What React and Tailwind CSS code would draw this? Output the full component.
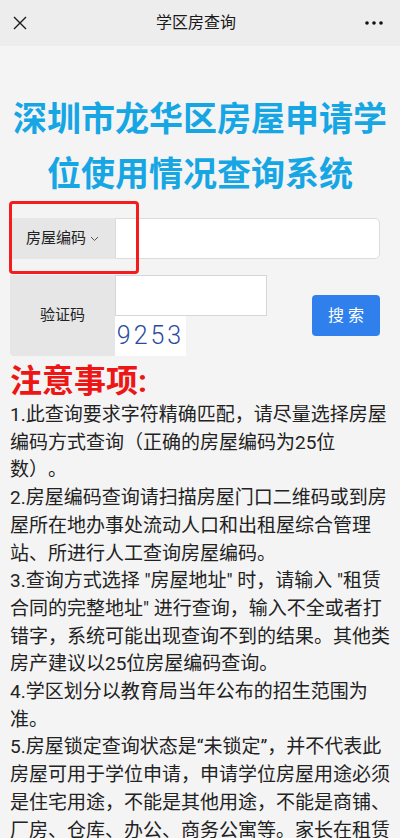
export default function App() {
  const font = { fontFamily: 'Roboto, "Noto Sans CJK SC", sans-serif' };

  return (
    <div className="min-h-screen bg-[#f4f4f4] text-[#222] [text-spacing-trim:space-all]" style={font}>
      {/* 顶部导航 */}
      <div className="h-[46px] bg-[#ededed] flex items-center justify-between px-[13px]">
        <svg width="14" height="14" viewBox="0 0 14 14" className="shrink-0">
          <path d="M1 1 L13 13 M13 1 L1 13" stroke="#1a1a1a" strokeWidth="1.4" />
        </svg>
        <span className="text-[16px] text-[#1a1a1a]">学区房查询</span>
        <svg width="18" height="6" viewBox="0 0 18 6" className="shrink-0 mr-[4px]">
          <circle cx="2" cy="3" r="1.8" fill="#111" />
          <circle cx="9" cy="3" r="1.8" fill="#111" />
          <circle cx="16" cy="3" r="1.8" fill="#111" />
        </svg>
      </div>

      <div className="px-[10px]">
        {/* 标题 */}
        <h1 className="pt-[46px] text-center text-[34px] leading-[55px] font-bold text-[#17a6e4]">
          深圳市龙华区房屋申请学
          <br />
          位使用情况查询系统
        </h1>

        {/* 查询表单 */}
        <div className="relative mt-[16px] mr-[10px]">
          <div className="flex h-[41px]">
            <div className="w-[105px] bg-[#e6e6e6] flex items-center justify-center gap-[4px] text-[15px] text-[#222]">
              房屋编码
              <svg width="9" height="6" viewBox="0 0 9 6">
                <path d="M1 1 L4.5 4.5 L8 1" fill="none" stroke="#555" strokeWidth="1" />
              </svg>
            </div>
            <div className="flex-1 bg-white border border-[#dcdcdc] rounded-r-[5px]" />
          </div>
          <div className="absolute left-[-1px] top-[-17px] w-[130px] h-[73px] border-[3.5px] border-[#f41c1c] rounded-[4px]" />

          <div className="flex items-center mt-[16px]">
            <div className="w-[105px] h-[81px] bg-[#e6e6e6] rounded-bl-[4px] flex items-center justify-center text-[15px] text-[#222]">
              验证码
            </div>
            <div className="flex flex-col">
              <div className="w-[152px] h-[41px] bg-white border border-[#d6d6d6]" />
              <div className="w-[71px] h-[40px] bg-white flex items-center justify-center text-[25px] font-light tracking-[3px] text-[#2b4c9e]">
                9253
              </div>
            </div>
            <button className="ml-auto w-[68px] h-[41px] bg-[#2f80ed] rounded-[4px] text-white text-[16px]">
              搜 索
            </button>
          </div>
        </div>

        {/* 注意事项 */}
        <div className="mt-[5px] text-[32px] leading-[40px] font-bold text-[#ee1515]">注意事项:</div>
        <div className="text-[19px] leading-[27.7px] text-[#222]">
          <p>1.此查询要求字符精确匹配，请尽量选择房屋编码方式查询（正确的房屋编码为25位数）。</p>
          <p>2.房屋编码查询请扫描房屋门口二维码或到房屋所在地办事处流动人口和出租屋综合管理站、所进行人工查询房屋编码。</p>
          <p>
            3.查询方式选择 "房屋地址" 时，请输入 "租赁合同的完整地址" 进行查询，输入不全或者打错字，系统可能出现查询不到的结果。其他类房产建议以25位房屋编码查询。
          </p>
          <p>4.学区划分以教育局当年公布的招生范围为准。</p>
          <p>
            5.房屋锁定查询状态是“未锁定”，并不代表此房屋可用于学位申请，申请学位房屋用途必须是住宅用途，不能是其他用途，不能是商铺、厂房、仓库、办公、商务公寓等。家长在租赁房屋时应仔细核实房屋用途。
          </p>
        </div>
      </div>
    </div>
  );
}
